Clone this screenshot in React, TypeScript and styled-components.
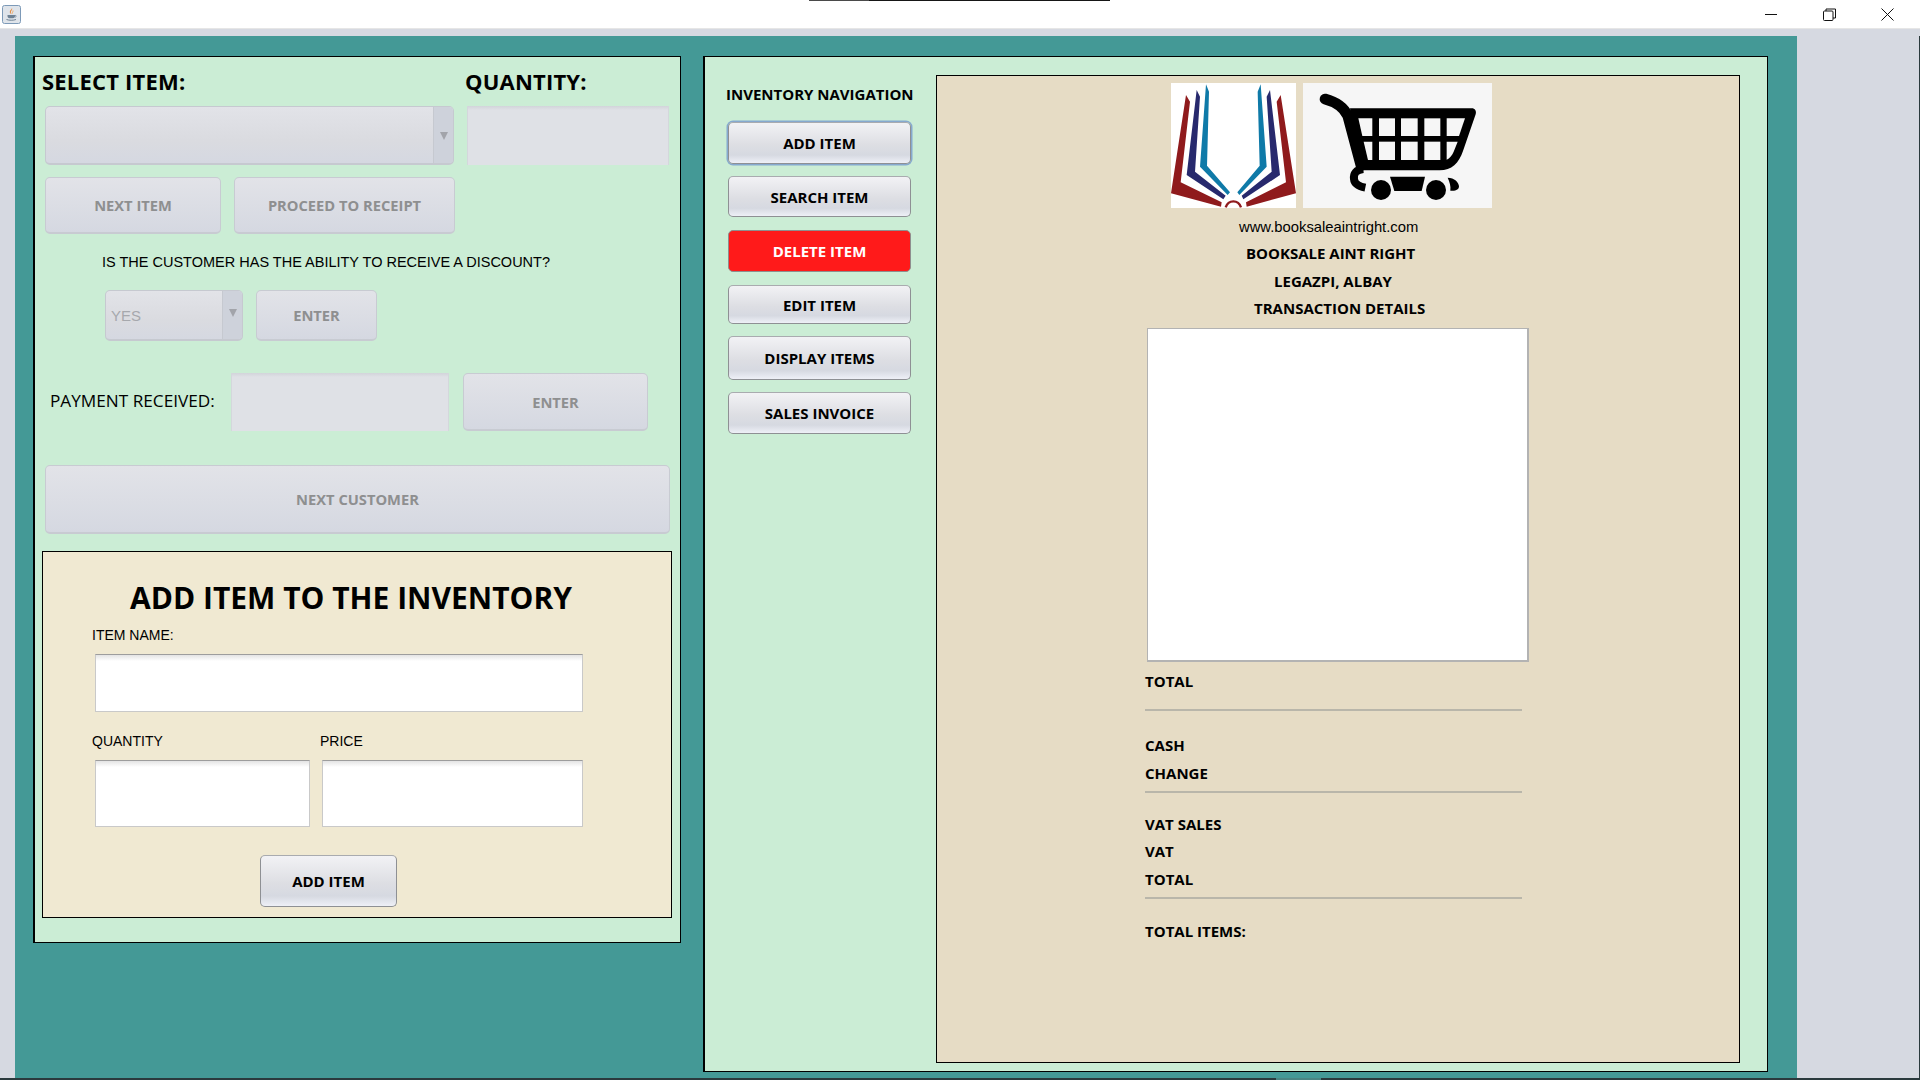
import styled, { createGlobalStyle } from 'styled-components';

const GlobalStyle = createGlobalStyle`
    * {
        box-sizing: border-box;
    }
    html, body {
        margin: 0;
        padding: 0;
        background: #d6d9e1;
    }
    body {
        font-family: "Liberation Sans", Arial, sans-serif;
        overflow: hidden;
    }
`;

const navButtons = [
    { label: 'ADD ITEM', top: 0, height: 42, focused: true },
    { label: 'SEARCH ITEM', top: 12, height: 41 },
    { label: 'DELETE ITEM', top: 13, height: 42, danger: true },
    { label: 'EDIT ITEM', top: 13, height: 39 },
    { label: 'DISPLAY ITEMS', top: 12, height: 44 },
    { label: 'SALES INVOICE', top: 12, height: 42 },
];

function JavaIcon() {
    return (
        <svg width="19" height="19" viewBox="0 0 19 19">
            <rect x="0.5" y="0.5" width="18" height="18" rx="2" fill="#dfe4ea" stroke="#7d9ab8" />
            <path d="M10 3c1 2-2 3-1 5 .4 1 1 1.200 1 1.200-2-.2-2.600-2-2-3.200.5-1 1.600-1.600 2-3z" fill="#e8873a" />
            <path d="M11 5.500c.3 1.200-1 1.800-.6 3" stroke="#f0a860" strokeWidth="1" fill="none" />
            <path d="M5.500 10h7.500v1.200c0 1.300-1 2-2 2H7.500c-1 0-2-.7-2-2z" fill="#6f8294" />
            <path d="M13 10.400c1.500-.3 1.800 1.500 0 1.800" stroke="#6f8294" strokeWidth="0.8" fill="none" />
            <path d="M4.500 14.500c2.500 1 7 1 9.500 0" stroke="#6f8294" strokeWidth="1" fill="none" />
        </svg>
    );
}

function BookLogo() {
    return (
        <LogoFrame $width={125} $bg="#ffffff">
            <svg width="125" height="125" viewBox="33 24 375 375">
                <polygon points="78,60 90,80 62,322 185,382 183,395 33,355" fill="#8f1a1c" />
                <polygon points="362,60 350,80 378,322 258,382 260,395 408,355" fill="#8f1a1c" />
                <polygon points="110,45 120,65 105,290 197,362 190,373 80,300" fill="#27296d" />
                <polygon points="330,45 320,65 335,290 245,362 250,373 360,300" fill="#27296d" />
                <polygon points="138,28 147,50 141,272 210,352 203,360 120,275" fill="#0f7aa8" />
                <polygon points="302,28 293,50 299,272 232,352 238,360 320,275" fill="#0f7aa8" />
                <path d="M197 397c8-24 38-24 46 0" stroke="#8f1a1c" strokeWidth="7" fill="none" />
            </svg>
        </LogoFrame>
    );
}

function CartLogo() {
    return (
        <LogoFrame $width={189} $bg="#f6f6f6">
            <svg width="189" height="125" viewBox="24 24 567 375">
                <path d="M90 72c30 8 55 22 68 50l40 150" stroke="#000" strokeWidth="32" strokeLinecap="round" fill="none" />
                <path d="M165 100H530c10 0 15 8 12 18l-38 110c-12 36-34 58-70 58H195z" fill="#000" />
                <g fill="#f6f6f6">
                    <polygon points="190,130 232,130 232,183 202,183" />
                    <polygon points="206,200 232,200 232,255 219,255" />
                    <rect x="252" y="130" width="48" height="53" />
                    <rect x="252" y="200" width="48" height="55" />
                    <rect x="318" y="130" width="50" height="53" />
                    <rect x="318" y="200" width="50" height="55" />
                    <rect x="388" y="130" width="48" height="53" />
                    <rect x="388" y="200" width="48" height="55" />
                    <polygon points="455,130 510,130 492,183 455,183" />
                    <path d="M455 200h33l-12 30c-4 10-12 20-21 24z" />
                </g>
                <path d="M205 282c-22 2-30 14-28 30 1 12 14 22 34 26" stroke="#000" strokeWidth="24" fill="none" />
                <circle cx="258" cy="345" r="30" fill="#000" />
                <circle cx="423" cy="345" r="30" fill="#000" />
                <polygon points="285,305 390,305 380,348 298,348" fill="#000" />
                <path d="M458 308c20 0 34 14 34 26 0 10-10 15-26 13 2-14-2-26-8-39z" fill="#000" />
            </svg>
        </LogoFrame>
    );
}

export default function App() {
    return (
        <Screen>
            <GlobalStyle />
            <TitleBar>
                <TopSliver />
                <JavaIcon />
                <WindowControls>
                    <WindowButton>
                        <svg width="12" height="12" viewBox="0 0 12 12">
                            <path d="M0 6.500h12" stroke="#111" strokeWidth="1" />
                        </svg>
                    </WindowButton>
                    <WindowButton>
                        <svg width="13" height="13" viewBox="0 0 13 13">
                            <path d="M3 3V1h9.500v9H10" stroke="#111" strokeWidth="1" fill="none" />
                            <rect x="0.500" y="3" width="9.500" height="9.500" rx="1" stroke="#111" strokeWidth="1" fill="none" />
                        </svg>
                    </WindowButton>
                    <WindowButton>
                        <svg width="13" height="13" viewBox="0 0 13 13">
                            <path d="M.5.500l12 12M12.500.500l-12 12" stroke="#111" strokeWidth="1" />
                        </svg>
                    </WindowButton>
                </WindowControls>
            </TitleBar>

            <Desktop>
                <Canvas>
                    <SalesPanel>
                        <HeadRow>
                            <Heading $width={423}>SELECT ITEM:</Heading>
                            <Heading>QUANTITY:</Heading>
                        </HeadRow>

                        <Row $top={10} $left={11} $gap={13}>
                            <Combo $width={409} $height={59} />
                            <DisabledInput $width={202} $height={59} />
                        </Row>

                        <Row $top={12} $left={11} $gap={13}>
                            <DisabledButton $width={176} $height={57}>NEXT ITEM</DisabledButton>
                            <DisabledButton $width={221} $height={57}>PROCEED TO RECEIPT</DisabledButton>
                        </Row>

                        <Question>IS THE CUSTOMER HAS THE ABILITY TO RECEIVE A DISCOUNT?</Question>

                        <Row $top={18} $left={71} $gap={13}>
                            <Combo $width={138} $height={51} $value="YES" />
                            <DisabledButton $width={121} $height={51}>ENTER</DisabledButton>
                        </Row>

                        <Row $top={32} $left={16}>
                            <PaymentLabel>PAYMENT RECEIVED:</PaymentLabel>
                            <DisabledInput $width={218} $height={58} />
                            <DisabledButton $width={185} $height={58} $offset={14}>ENTER</DisabledButton>
                        </Row>

                        <Row $top={34} $left={11}>
                            <DisabledButton $width={625} $height={69}>NEXT CUSTOMER</DisabledButton>
                        </Row>

                        <AddCard>
                            <CardTitle>ADD ITEM TO THE INVENTORY</CardTitle>
                            <Row $top={9} $left={49}>
                                <FieldLabel>ITEM NAME:</FieldLabel>
                            </Row>
                            <Row $top={11} $left={52}>
                                <WhiteInput $width={488} $height={58} />
                            </Row>
                            <Row $top={21} $left={49}>
                                <FieldLabel $width={228}>QUANTITY</FieldLabel>
                                <FieldLabel>PRICE</FieldLabel>
                            </Row>
                            <Row $top={11} $left={52} $gap={12}>
                                <WhiteInput $width={215} $height={67} />
                                <WhiteInput $width={261} $height={67} />
                            </Row>
                            <Row $top={28} $left={217}>
                                <RaisedButton $width={137} $height={52}>ADD ITEM</RaisedButton>
                            </Row>
                        </AddCard>
                    </SalesPanel>

                    <InventoryPanel>
                        <NavColumn>
                            <NavTitle>INVENTORY NAVIGATION</NavTitle>
                            {navButtons.map((btn) => (
                                <NavButton
                                    key={btn.label}
                                    $top={btn.top}
                                    $height={btn.height}
                                    $focused={btn.focused}
                                    $danger={btn.danger}
                                >
                                    {btn.label}
                                </NavButton>
                            ))}
                        </NavColumn>

                        <Receipt>
                            <LogoRow>
                                <BookLogo />
                                <CartLogo />
                            </LogoRow>
                            <Website>www.booksaleaintright.com</Website>
                            <ReceiptLine $left={309} $top={6}>BOOKSALE AINT RIGHT</ReceiptLine>
                            <ReceiptLine $left={337} $top={6}>LEGAZPI, ALBAY</ReceiptLine>
                            <ReceiptLine $left={317} $top={5}>TRANSACTION DETAILS</ReceiptLine>
                            <ReceiptBox />
                            <ReceiptLine $left={208} $top={9}>TOTAL</ReceiptLine>
                            <Divider $top={16} />
                            <ReceiptLine $left={208} $top={24}>CASH</ReceiptLine>
                            <ReceiptLine $left={208} $top={6}>CHANGE</ReceiptLine>
                            <Divider $top={6} />
                            <ReceiptLine $left={208} $top={21}>VAT SALES</ReceiptLine>
                            <ReceiptLine $left={208} $top={5}>VAT</ReceiptLine>
                            <ReceiptLine $left={208} $top={6}>TOTAL</ReceiptLine>
                            <Divider $top={6} />
                            <ReceiptLine $left={208} $top={22}>TOTAL ITEMS:</ReceiptLine>
                        </Receipt>
                    </InventoryPanel>
                </Canvas>
                <EdgeLine />
            </Desktop>

            <Taskbar>
                <TaskbarTab />
            </Taskbar>
        </Screen>
    );
}

const Screen = styled.div`
    width: 1920px;
    height: 1080px;
    display: flex;
    flex-direction: column;
    overflow: hidden;
    background: #d6d9e1;
`;

const TitleBar = styled.div`
    position: relative;
    height: 29px;
    flex: none;
    display: flex;
    align-items: center;
    justify-content: space-between;
    padding: 0 3px 0 2px;
    background: #ffffff;
    border-bottom: 1px solid #e6e6e6;
`;

const TopSliver = styled.div`
    position: absolute;
    top: 0;
    left: 809px;
    width: 301px;
    height: 1px;
    background: linear-gradient(to right, #4a4a4a 0, #4a4a4a 60px, #161616 60px);
`;

const WindowControls = styled.div`
    display: flex;
`;

const WindowButton = styled.div`
    width: 58.500px;
    height: 27px;
    display: flex;
    align-items: center;
    justify-content: center;
`;

const Desktop = styled.div`
    flex: 1;
    display: flex;
    justify-content: space-between;
    padding: 7px 0 0 15px;
`;

const EdgeLine = styled.div`
    width: 1px;
    background: #2b3a3d;
`;

const Canvas = styled.div`
    width: 1782px;
    display: flex;
    align-items: flex-start;
    gap: 22px;
    padding: 20px 0 0 18px;
    background: #449996;
`;

const Taskbar = styled.div`
    height: 2px;
    flex: none;
    padding-left: 1276px;
    background: #2b3a3d;
`;

const TaskbarTab = styled.div`
    width: 45px;
    height: 2px;
    background: #4a8583;
`;

const SalesPanel = styled.div`
    width: 648px;
    height: 887px;
    background: #cbedd5;
    border: 1px solid #000;
    box-shadow: inset 1px 0 0 #000;
`;

const InventoryPanel = styled.div`
    width: 1065px;
    height: 1016px;
    display: flex;
    align-items: flex-start;
    background: #cbedd5;
    border: 1px solid #000;
    box-shadow: inset 1px 0 0 #000;
`;

const HeadRow = styled.div`
    display: flex;
    align-items: center;
    height: 30px;
    margin-top: 9px;
    padding-left: 8px;
`;

const Heading = styled.div<{ $width?: number }>`
    width: ${(p) => (p.$width ? `${p.$width}px` : 'auto')};
    font-family: "Open Sans", sans-serif;
    font-weight: 700;
    font-size: 22px;
    letter-spacing: 0.2px;
    color: #000;
`;

const Row = styled.div<{ $top?: number; $left?: number; $gap?: number }>`
    display: flex;
    align-items: center;
    margin-top: ${(p) => p.$top ?? 0}px;
    padding-left: ${(p) => p.$left ?? 0}px;
    gap: ${(p) => p.$gap ?? 0}px;
`;

const ComboBox = styled.div<{ $width: number; $height: number }>`
    width: ${(p) => p.$width}px;
    height: ${(p) => p.$height}px;
    display: flex;
    border: 1px solid #c6c9d0;
    border-bottom-width: 2px;
    border-radius: 5px;
    overflow: hidden;
    background: linear-gradient(to bottom, #e2e3e8 0%, #dadbe0 60%, #d5d8e1 100%);
`;

const ComboValue = styled.div`
    flex: 1;
    display: flex;
    align-items: center;
    padding-left: 5px;
    font-size: 15px;
    color: #a6a8ad;
`;

const ComboArrow = styled.div`
    width: 20px;
    display: flex;
    justify-content: center;
    background: #ced2db;
    border-left: 1px solid #c6c9d0;
`;

const ArrowGlyph = styled.div<{ $tall: boolean }>`
    margin-top: ${(p) => (p.$tall ? 25 : 18)}px;
    width: 0;
    height: 0;
    border-left: 4px solid transparent;
    border-right: 4px solid transparent;
    border-top: 8px solid #a2a4aa;
`;

function Combo({ $width, $height, $value }: { $width: number; $height: number; $value?: string }) {
    return (
        <ComboBox $width={$width} $height={$height}>
            <ComboValue>{$value}</ComboValue>
            <ComboArrow>
                <ArrowGlyph $tall={$height > 51} />
            </ComboArrow>
        </ComboBox>
    );
}

const DisabledInput = styled.div<{ $width: number; $height: number }>`
    width: ${(p) => p.$width}px;
    height: ${(p) => p.$height}px;
    background: linear-gradient(to bottom, #d2d4da 0, #dfe1e6 4px, #dfe1e6 100%);
    border-left: 1px solid #d4d7dc;
    border-right: 1px solid #d4d7dc;
`;

const DisabledButton = styled.div<{ $width: number; $height: number; $offset?: number }>`
    width: ${(p) => p.$width}px;
    height: ${(p) => p.$height}px;
    margin-left: ${(p) => p.$offset ?? 0}px;
    display: flex;
    align-items: center;
    justify-content: center;
    border: 1px solid #c8cbd2;
    border-bottom-width: 2px;
    border-radius: 5px;
    background: linear-gradient(to bottom, #e2e3e8 0%, #d5d8e1 100%);
    font-family: "Open Sans", sans-serif;
    font-weight: 700;
    font-size: 14.700px;
    color: #8e8f90;
`;

const Question = styled.div`
    height: 20px;
    margin-top: 18px;
    padding-left: 68px;
    font-size: 14.500px;
    line-height: 20px;
    color: #000;
`;

const PaymentLabel = styled.div`
    width: 181px;
    padding-bottom: 3px;
    font-family: "Open Sans", sans-serif;
    font-size: 17.200px;
    color: #000;
`;

const AddCard = styled.div`
    width: 630px;
    height: 367px;
    margin: 17px 0 0 8px;
    background: #f0e9d2;
    border: 1px solid #000;
`;

const CardTitle = styled.div`
    width: 616px;
    height: 40px;
    margin-top: 26px;
    text-align: center;
    font-family: "Open Sans", sans-serif;
    font-weight: 700;
    font-size: 30px;
    line-height: 40px;
    color: #000;
`;

const FieldLabel = styled.div<{ $width?: number }>`
    width: ${(p) => (p.$width ? `${p.$width}px` : 'auto')};
    height: 16px;
    font-size: 14px;
    line-height: 16px;
    color: #000;
`;

const WhiteInput = styled.div<{ $width: number; $height: number }>`
    width: ${(p) => p.$width}px;
    height: ${(p) => p.$height}px;
    background: linear-gradient(to bottom, #e4e4e4 0, #ffffff 6px);
    border: 1px solid #c9c9c9;
    border-top-color: #9d9d9d;
`;

const raised = `
    display: flex;
    align-items: center;
    justify-content: center;
    font-family: "Open Sans", sans-serif;
    font-weight: 700;
    font-size: 15px;
    color: #000;
    border: 1px solid #8e9094;
    border-top-color: #a9abaf;
    border-radius: 5px;
    background: linear-gradient(to bottom, #f2f2f5 0%, #dddee3 55%, #d6d9e1 80%, #eef0f7 100%);
`;

const RaisedButton = styled.div<{ $width: number; $height: number }>`
    ${raised}
    width: ${(p) => p.$width}px;
    height: ${(p) => p.$height}px;
`;

const NavColumn = styled.div`
    width: 232px;
    flex: none;
    padding: 0 0 0 24px;
`;

const NavTitle = styled.div`
    height: 22px;
    margin: 26px 0 17px -2px;
    font-family: "Open Sans", sans-serif;
    font-weight: 700;
    font-size: 15px;
    line-height: 22px;
    white-space: nowrap;
    color: #000;
`;

const NavButton = styled.div<{ $top: number; $height: number; $focused?: boolean; $danger?: boolean }>`
    ${raised}
    width: 183px;
    height: ${(p) => p.$height}px;
    margin-top: ${(p) => p.$top}px;
    ${(p) => p.$focused && 'box-shadow: 0 0 0 1.500px #86a9cf;'}
    ${(p) => p.$danger && 'background: #ff1a1a; color: #ffffff; border-color: #8e8e8e;'}
`;

const Receipt = styled.div`
    width: 804px;
    height: 988px;
    margin-top: 18px;
    background: #e6dcc5;
    border: 1px solid #000;
`;

const LogoRow = styled.div`
    display: flex;
    gap: 7px;
    margin-top: 7px;
    padding-left: 234px;
`;

const LogoFrame = styled.div<{ $width: number; $bg: string }>`
    width: ${(p) => p.$width}px;
    height: 125px;
    background: ${(p) => p.$bg};
    svg {
        display: block;
    }
`;

const Website = styled.div`
    height: 20px;
    margin-top: 9px;
    padding-left: 302px;
    font-size: 14.800px;
    line-height: 20px;
    color: #000;
`;

const ReceiptLine = styled.div<{ $left: number; $top: number }>`
    height: 22px;
    margin-top: ${(p) => p.$top}px;
    padding-left: ${(p) => p.$left}px;
    font-family: "Open Sans", sans-serif;
    font-weight: 700;
    font-size: 15px;
    line-height: 20px;
    color: #000;
`;

const ReceiptBox = styled.div`
    width: 382px;
    height: 334px;
    margin: 8px 0 0 210px;
    background: #ffffff;
    border: 1px solid #b3b3b3;
    border-width: 1px 2px 2px 1px;
`;

const Divider = styled.div<{ $top: number }>`
    width: 377px;
    height: 2px;
    margin: ${(p) => p.$top}px 0 0 208px;
    background: #b9b6aa;
`;
